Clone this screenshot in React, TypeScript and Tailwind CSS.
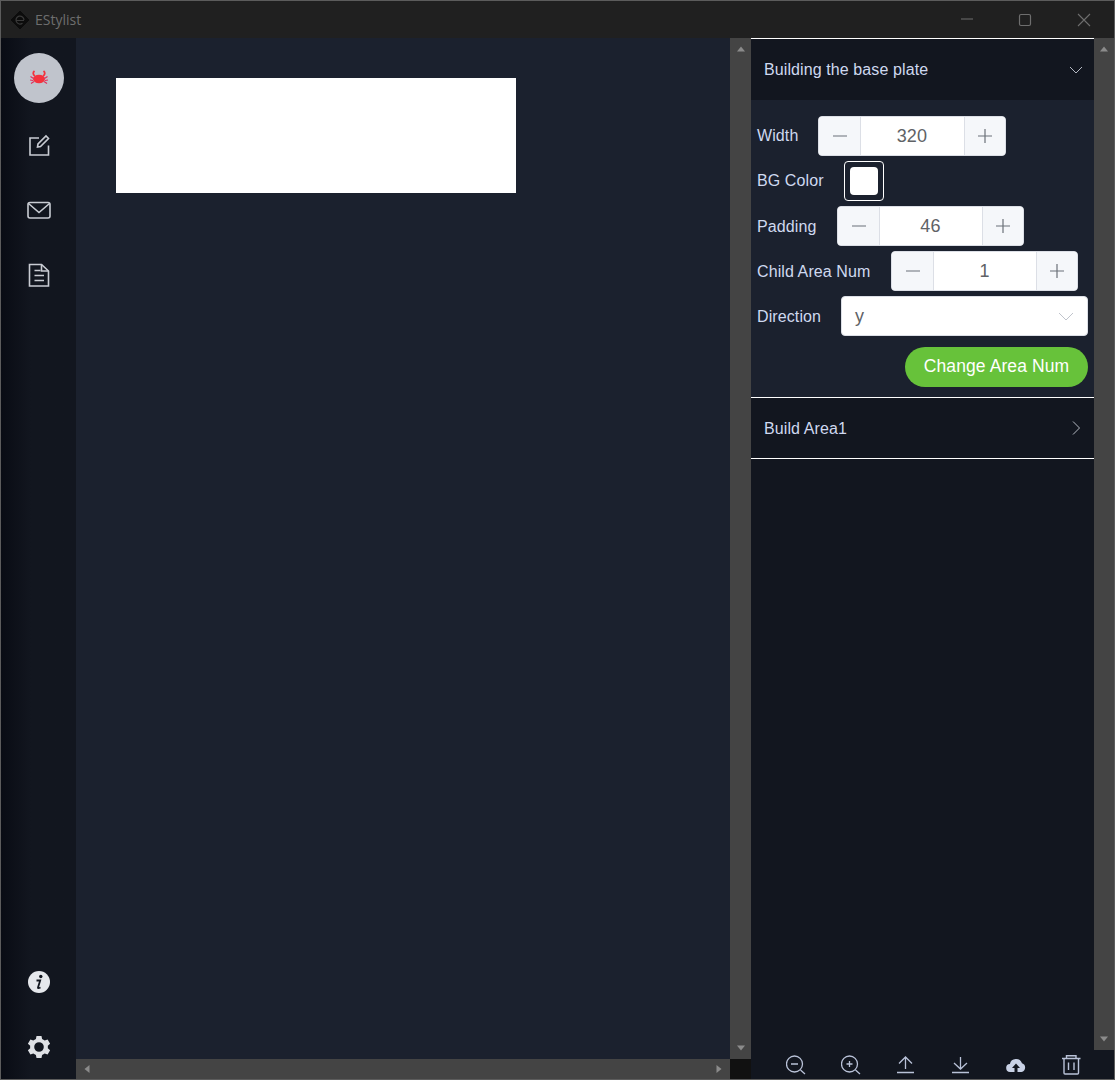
const Minus = () => (
  <svg width="14" height="14" viewBox="0 0 14 14"><path d="M0 7h14" stroke="#6b7078" strokeWidth="1.2" /></svg>
);
const Plus = () => (
  <svg width="14" height="14" viewBox="0 0 14 14"><path d="M0 7h14M7 0v14" stroke="#6b7078" strokeWidth="1.2" /></svg>
);

function NumberInput({ value, width }: { value: string; width: string }) {
  return (
    <div className={`flex h-10 overflow-hidden rounded border border-[#dcdfe6] bg-white ${width}`}>
      <div className="flex w-[42px] shrink-0 items-center justify-center border-r border-[#dcdfe6] bg-[#f5f7fa]"><Minus /></div>
      <div className="flex flex-1 items-center justify-center pr-[2px] text-[18px] text-[#606266]">{value}</div>
      <div className="flex w-[41px] shrink-0 items-center justify-center border-l border-[#dcdfe6] bg-[#f5f7fa]"><Plus /></div>
    </div>
  );
}

function Scroll({ d }: { d: string }) {
  return (
    <svg width="8" height="8" viewBox="0 0 8 8"><path d={d} fill="#8b8b8b" /></svg>
  );
}

const iconStroke = "#c9ccd3";
const toolStroke = "#b9c2d8";

export default function App() {
  return (
    <div className="flex h-[1080px] w-[1115px] flex-col overflow-hidden border border-[#5c5c5c] font-['Liberation_Sans',Arial,sans-serif]">
      <div className="flex h-[37px] shrink-0 items-center bg-[#202020]">
        <svg className="ml-[9px]" width="20" height="20" viewBox="0 0 20 20" fill="none">
          <path d="M10 1 19 10 10 19 1 10Z" fill="#0c0c0c" stroke="#0c0c0c" />
          <path d="M6 10.5h8M14 10a4 4 0 1 0-1.500 3.200" stroke="#3a3a3a" strokeWidth="1.200" />
        </svg>
        <span className="ml-[5px] font-['Open_Sans',sans-serif] text-[14px] text-[#6e6e6e]">EStylist</span>
        <div className="ml-auto flex items-center">
          <svg width="14" height="14" viewBox="0 0 14 14" className="mr-[44px]"><path d="M1 6h12" stroke="#6e6e6e" /></svg>
          <svg width="14" height="14" viewBox="0 0 14 14" className="mr-[45px]" fill="none"><rect x="1.500" y="1.500" width="11" height="11" rx="1.500" stroke="#6e6e6e" strokeWidth="1.200" /></svg>
          <svg width="14" height="14" viewBox="0 0 14 14" className="mr-[23px]"><path d="M1 1l12 12M13 1 1 13" stroke="#6e6e6e" strokeWidth="1.100" /></svg>
        </div>
      </div>

      <div className="flex min-h-0 flex-1">
        <aside className="flex w-[75px] shrink-0 flex-col items-center bg-gradient-to-r from-[#090c14] to-[#12161f] to-40%">
          <div className="mt-[15px] flex h-[50px] w-[50px] items-center justify-center rounded-full bg-[#c0c4cc]">
            <svg width="18" height="18" viewBox="0 0 18 18" fill="none">
              <ellipse cx="9" cy="10" rx="6" ry="4.200" fill="#f4323c" />
              <path d="M4.500 2C2.500 3.500 3 6 5 7M13.500 2c2 1.500 1.500 4-.5 5" stroke="#f4323c" strokeWidth="1.800" />
              <path d="M.5 7.500l3 2M0 11l3 .5M1 14.500l3-2M17.500 7.500l-3 2M18 11l-3 .5M17 14.500l-3-2" stroke="#e0305c" strokeWidth="1.200" />
            </svg>
          </div>
          <div className="mt-[30px] flex flex-col items-center gap-[41px]">
            <svg width="24" height="24" viewBox="0 0 24 24" fill="none" stroke={iconStroke} strokeWidth="1.600">
              <path d="M12 5H3v17h18.500V12.500" />
              <path d="M10.500 14 11 11 19 3 21.500 5.500 13.500 13.500Z" />
            </svg>
            <svg width="24" height="24" viewBox="0 0 24 24" fill="none" stroke={iconStroke} strokeWidth="1.600">
              <rect x="1" y="4.500" width="22" height="15.500" rx="2" />
              <path d="M1.500 5.500 12 14.500 22.500 5.500" />
            </svg>
            <svg width="24" height="24" viewBox="0 0 24 24" fill="none" stroke={iconStroke} strokeWidth="1.600">
              <path d="M2.500 1.500H14.500L21.500 8V23H2.500Z" />
              <path d="M14.500 1.500V8H21.500" />
              <path d="M7.500 7.500h6M7.500 12.500H17M7.500 17.500H17" />
            </svg>
          </div>
          <div className="mt-auto flex flex-col items-center gap-[41px] pb-[20px]">
            <svg width="24" height="24" viewBox="0 0 24 24">
              <circle cx="12" cy="12" r="11" fill="#e6e8ec" />
              <circle cx="13.800" cy="6.500" r="1.700" fill="#12161f" />
              <path d="M9.500 10.500h3.700L11 17.500q-.3 1.300 2.500 0" fill="none" stroke="#12161f" strokeWidth="1.800" />
            </svg>
            <svg width="24" height="24" viewBox="0 0 24 24">
              <path fill="#dfe1e5" fillRule="evenodd" d="M9.500 1h5l.6 3 2.600 1.500 2.900-1 2.500 4.300-2.300 2a8 8 0 0 1 0 2.400l2.300 2-2.500 4.300-2.900-1-2.600 1.500-.6 3h-5l-.6-3-2.600-1.500-2.900 1-2.500-4.300 2.300-2a8 8 0 0 1 0-2.400l-2.300-2 2.500-4.300 2.900 1L8.900 4ZM12 7.200a4.800 4.800 0 1 0 0 9.600 4.800 4.800 0 0 0 0-9.600Z" />
            </svg>
          </div>
        </aside>

        <div className="flex w-[675px] shrink-0 flex-col">
          <div className="flex min-h-0 flex-1">
            <main className="w-[654px] bg-[#1b212e] pl-[40px] pt-[40px]">
              <div className="h-[115px] w-[400px] bg-white" />
            </main>
            <div className="flex w-[21px] flex-col items-center justify-between bg-[#444444] py-[7px]">
              <Scroll d="M4 1.500 8 6.500H0Z" />
              <Scroll d="M4 6.500 0 1.500H8Z" />
            </div>
          </div>
          <div className="flex h-5 shrink-0">
            <div className="flex w-[654px] items-center justify-between bg-[#444444] px-[7px]">
              <Scroll d="M1.500 4 6.500 0V8Z" />
              <Scroll d="M6.500 4 1.500 0V8Z" />
            </div>
            <div className="w-[21px] bg-[#111111]" />
          </div>
        </div>

        <div className="flex min-w-0 flex-1 flex-col bg-[#12161f]">
          <div className="flex min-h-0 flex-1">
            <div className="w-[343px] shrink-0 border-t border-white text-[16px] tracking-[0.1px] text-[#cfd9f0]">
              <div className="flex h-[61px] items-center justify-between bg-[#12161f] pl-[13px] pr-[11px]">
                <span>Building the base plate</span>
                <svg width="14" height="14" viewBox="0 0 14 14" fill="none"><path d="M1 4 7 10 13 4" stroke="#b3b8c2" /></svg>
              </div>
              <div className="flex flex-col gap-[5px] bg-[#1b212e] pb-[10px] pl-[6px] pr-[6px] pt-[16px]">
                <div className="flex items-center gap-[20px]"><span>Width</span><NumberInput value="320" width="w-[188px]" /></div>
                <div className="flex items-center gap-[20px]">
                  <span>BG Color</span>
                  <div className="flex h-10 w-10 items-center justify-center rounded border border-white">
                    <div className="h-7 w-7 rounded-sm bg-white" />
                  </div>
                </div>
                <div className="flex items-center gap-[21px]"><span className="pt-[2px]">Padding</span><NumberInput value="46" width="w-[187px]" /></div>
                <div className="flex items-center gap-[21px]"><span className="pt-[2px]">Child Area Num</span><NumberInput value="1" width="w-[187px]" /></div>
                <div className="flex items-center gap-[20px]">
                  <span className="pt-[2px]">Direction</span>
                  <div className="flex h-10 flex-1 items-center justify-between rounded border border-[#dcdfe6] bg-white pl-[13px] pr-[13px] text-[18px] text-[#606266]">
                    <span>y</span>
                    <svg width="16" height="16" viewBox="0 0 16 16" fill="none"><path d="M1 5 8 12 15 5" stroke="#c0c4cc" /></svg>
                  </div>
                </div>
                <div className="mt-[6px] flex justify-end">
                  <button className="h-10 w-[183px] rounded-full bg-[#67c23a] pb-[2px] text-[17.5px] text-white">Change Area Num</button>
                </div>
              </div>
              <div className="flex h-[62px] items-center justify-between border-y border-white bg-[#12161f] pl-[13px] pr-[11px]">
                <span className="pt-[2px]">Build Area1</span>
                <svg width="14" height="14" viewBox="0 0 14 14" fill="none"><path d="M4 0.500 10.500 7 4 13.500" stroke="#b3b8c2" /></svg>
              </div>
            </div>
            <div className="flex w-5 flex-col items-center justify-between bg-[#444444] py-[7px]">
              <Scroll d="M4 1.500 8 6.500H0Z" />
              <Scroll d="M4 6.500 0 1.500H8Z" />
            </div>
          </div>
          <div className="flex h-[29px] shrink-0 items-center gap-[35px] pl-[35px]">
            <svg width="20" height="20" viewBox="0 0 20 20" fill="none" stroke={toolStroke} strokeWidth="1.300"><circle cx="8.500" cy="9" r="8" /><path d="M5 9h7M14.500 15l4.500 4" /></svg>
            <svg width="20" height="20" viewBox="0 0 20 20" fill="none" stroke={toolStroke} strokeWidth="1.300"><circle cx="8.500" cy="9" r="8" /><path d="M5.500 9h6M8.500 6v6M14.500 15l4.500 4" /></svg>
            <svg width="20" height="20" viewBox="0 0 20 20" fill="none" stroke={toolStroke} strokeWidth="1.300"><path d="M3 8.500 9.500 2 16 8.500M9.500 2V14M1 17.500H18" /></svg>
            <svg width="20" height="20" viewBox="0 0 20 20" fill="none" stroke={toolStroke} strokeWidth="1.300"><path d="M3 8 9.500 14 16 8M9.500 2V14M1 17.500H18" /></svg>
            <svg width="20" height="20" viewBox="0 0 20 20"><path fill="#c9d2e6" d="M4.500 17a4 4 0 0 1-.6-8A6.300 6.300 0 0 1 16 8.300 4.500 4.500 0 0 1 15.500 17h-4v-4h2.500L10 8.500 6 13h2.500v4Z" /></svg>
            <svg width="20" height="20" viewBox="0 0 20 20" fill="none" stroke={toolStroke} strokeWidth="1.400"><path d="M1 3.500H19.500M5.500 3.500V.7H15V3.500M3 3.500V18A1 1 0 0 0 4 19H16.500A1 1 0 0 0 17.500 18V3.500M7.500 7.500V15M13 7.500V15" /></svg>
          </div>
        </div>
      </div>
    </div>
  );
}
